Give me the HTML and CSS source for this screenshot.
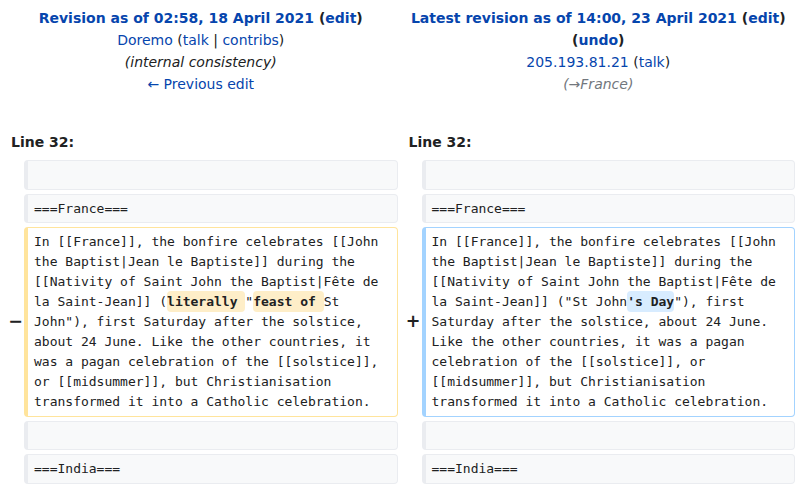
FILE: index.html
```html
<!DOCTYPE html>
<html lang="en">
<head>
<meta charset="utf-8">
<title>Diff</title>
<link rel="stylesheet" href="styles.css">
</head>
<body>
<table class="diff">
  <colgroup>
    <col class="col-marker">
    <col class="col-content">
    <col class="col-marker">
    <col class="col-content">
  </colgroup>
  <tr class="diff-title">
    <td colspan="2" class="diff-otitle">
      <div><strong><a href="#">Revision as of 02:58, 18 April 2021</a> <span class="paren">(<a href="#">edit</a>)</span></strong></div>
      <div><a href="#">Doremo</a> (<a href="#">talk</a> | <a href="#">contribs</a>)</div>
      <div class="summary">(internal consistency)</div>
      <div><a href="#">← Previous edit</a></div>
    </td>
    <td colspan="2" class="diff-ntitle">
      <div><strong><a href="#">Latest revision as of 14:00, 23 April 2021</a> <span class="paren">(<a href="#">edit</a>)</span> <span class="paren">(<a href="#">undo</a>)</span></strong></div>
      <div><a href="#">205.193.81.21</a> (<a href="#">talk</a>)</div>
      <div class="comment">(→France)</div>
    </td>
  </tr>
  <tr>
    <td colspan="2" class="diff-lineno">Line 32:</td>
    <td colspan="2" class="diff-lineno">Line 32:</td>
  </tr>
  <tr>
    <td class="diff-marker"></td>
    <td class="diff-context"><div><br></div></td>
    <td class="diff-marker"></td>
    <td class="diff-context"><div><br></div></td>
  </tr>
  <tr>
    <td class="diff-marker"></td>
    <td class="diff-context"><div>===France===</div></td>
    <td class="diff-marker"></td>
    <td class="diff-context"><div>===France===</div></td>
  </tr>
  <tr>
    <td class="diff-marker"><span class="sign">−</span></td>
    <td class="diff-deletedline"><div>In [[France]], the bonfire celebrates [[John the Baptist|Jean le Baptiste]] during the [[Nativity of Saint John the Baptist|Fête de la Saint-Jean]] (<del class="diffchange">literally </del>"<del class="diffchange">feast of </del>St John"), first Saturday after the solstice, about 24 June. Like the other countries, it was a pagan celebration of the [[solstice]], or [[midsummer]], but Christianisation transformed it into a Catholic celebration.</div></td>
    <td class="diff-marker"><span class="sign">+</span></td>
    <td class="diff-addedline"><div>In [[France]], the bonfire celebrates [[John the Baptist|Jean le Baptiste]] during the [[Nativity of Saint John the Baptist|Fête de la Saint-Jean]] ("St John<ins class="diffchange">'s Day</ins>"), first Saturday after the solstice, about 24 June. Like the other countries, it was a pagan celebration of the [[solstice]], or [[midsummer]], but Christianisation transformed it into a Catholic celebration.</div></td>
  </tr>
  <tr>
    <td class="diff-marker"></td>
    <td class="diff-context"><div><br></div></td>
    <td class="diff-marker"></td>
    <td class="diff-context"><div><br></div></td>
  </tr>
  <tr>
    <td class="diff-marker"></td>
    <td class="diff-context"><div>===India===</div></td>
    <td class="diff-marker"></td>
    <td class="diff-context"><div>===India===</div></td>
  </tr>
</table>
</body>
</html>
```

FILE: styles.css
```css
html, body {
  margin: 0;
  padding: 0;
  background: #ffffff;
}

body {
  font-family: "DejaVu Sans", sans-serif;
  font-size: 14px;
  color: #202122;
}

a {
  color: #0645ad;
  text-decoration: none;
}

table.diff {
  width: 799px;
  border: 0;
  border-spacing: 4px;
  table-layout: fixed;
  margin: 0;
}

.col-marker {
  width: 16px;
}

.diff-title td {
  text-align: center;
  vertical-align: top;
  line-height: 22px;
  padding: 3px 7px 28px;
}

.paren {
  color: #202122;
}

.summary {
  font-style: italic;
}

.comment {
  font-style: italic;
  color: #72777d;
}

.diff-lineno {
  font-weight: bold;
  line-height: 22px;
  padding: 4px 7px 3px;
}

.diff-marker {
  text-align: right;
  vertical-align: middle;
  font-weight: bold;
  font-size: 17.5px;
  line-height: 1.2;
  padding: 0;
}

.sign {
  margin-right: -3px;
}

.diff-context,
.diff-deletedline,
.diff-addedline {
  font-family: "DejaVu Sans Mono", monospace;
  font-size: 13px;
  line-height: 20px;
  vertical-align: top;
  white-space: pre-wrap;
  word-wrap: break-word;
  border-style: solid;
  border-width: 1px 1px 1px 4px;
  border-radius: 4px;
  padding: 4px 6px 3.5px 6px;
}

.diff-context {
  background: #f8f9fa;
  border-color: #eaecf0;
  color: #202122;
}

.diff-deletedline {
  background: #ffffff;
  border-color: #ffe49c;
}

.diff-addedline {
  background: #ffffff;
  border-color: #a3d3ff;
}

.diffchange {
  font-weight: bold;
  text-decoration: none;
  border-radius: 4px;
  padding: 3px 0;
}

.diff-deletedline .diffchange {
  background: #feeec8;
}

.diff-addedline .diffchange {
  background: #d8ecff;
}
```
